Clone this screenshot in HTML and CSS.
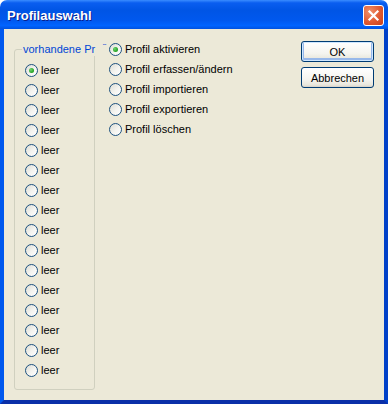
FILE: index.html
```html
<!DOCTYPE html>
<html lang="de">
<head>
    <meta charset="UTF-8">
    <title>Profilauswahl</title>
    <link rel="stylesheet" href="styles.css">
</head>
<body>
    <div class="window">
        <div class="titlebar">
            <span class="title">Profilauswahl</span>
            <button class="close-button" title="Schließen">
                <svg width="13" height="13" viewBox="0 0 13 13">
                    <path d="M2.5 2.5 L10.5 10.5 M10.5 2.5 L2.5 10.5" stroke="#fff" stroke-width="2.2" stroke-linecap="square"/>
                </svg>
            </button>
        </div>
        <div class="client">
            <div class="group">
                <span class="group-label">vorhandene Pr<span class="dots">...</span></span>
                <div id="profileList" class="radio-list"></div>
            </div>
            <div class="radio-list actions">
                <label class="radio-row"><span class="radio checked"></span>Profil aktivieren</label>
                <label class="radio-row"><span class="radio"></span>Profil erfassen/ändern</label>
                <label class="radio-row"><span class="radio"></span>Profil importieren</label>
                <label class="radio-row"><span class="radio"></span>Profil exportieren</label>
                <label class="radio-row"><span class="radio"></span>Profil löschen</label>
            </div>
            <div class="buttons">
                <button class="btn default">OK</button>
                <button class="btn">Abbrechen</button>
            </div>
        </div>
    </div>

    <script>
        // 16 empty profile slots, first one selected
        const list = document.getElementById('profileList');
        for (let i = 0; i < 16; i++) {
            const row = document.createElement('label');
            row.className = 'radio-row';
            row.innerHTML = '<span class="radio' + (i === 0 ? ' checked' : '') + '"></span>leer';
            list.appendChild(row);
        }
    </script>
</body>
</html>
```

FILE: styles.css
```css
body {
    margin: 0;
    background: #fff;
    font-family: "Liberation Sans", Arial, sans-serif;
    font-size: 11px;
}
.window {
    width: 388px;
    height: 404px;
    display: flex;
    flex-direction: column;
}
.titlebar {
    height: 29px;
    flex-shrink: 0;
    display: flex;
    align-items: center;
    justify-content: space-between;
    padding: 0 4px 0 7px;
    border-radius: 7px 7px 0 0;
    background: linear-gradient(#3a8cff 0%, #0a5ef0 10%, #0055e5 35%, #0058ee 70%, #0064ff 88%, #0052e0 100%);
}
.title {
    color: #fff;
    font-weight: bold;
    font-size: 13px;
    font-family: "Liberation Sans", Arial, sans-serif;
    text-shadow: 1px 1px 0 #0a1f8c;
    margin-top: 2px;
}
.close-button {
    width: 21px;
    height: 21px;
    padding: 0;
    margin-top: 2px;
    border: 1px solid #fff;
    border-radius: 3px;
    background: radial-gradient(circle at 30% 30%, #f0906a, #e05a32 55%, #c8401c);
    display: flex;
    align-items: center;
    justify-content: center;
}
.client {
    flex: 1;
    display: flex;
    align-items: flex-start;
    background: #ece9d8;
    border: 4px solid #0055e5;
    border-top: none;
    border-bottom-color: #0a2fa8;
    border-left-color: #0058ee;
    border-right-color: #0040c8;
    padding-left: 10px;
}
.group {
    position: relative;
    width: 81px;
    height: 341px;
    box-sizing: border-box;
    margin-top: 20px;
    padding: 10px 0 0 10px;
    border: 1px solid #d0d0bf;
    border-radius: 3px;
}
.group-label {
    position: absolute;
    top: -7px;
    left: 7px;
    padding: 0 1px;
    background: #ece9d8;
    color: #0046d5;
    line-height: 13px;
    white-space: nowrap;
    display: flex;
    align-items: flex-start;
}
.dots {
    margin-left: 7px;
    margin-top: -4px;
    font-size: 8px;
    line-height: 8px;
    letter-spacing: -1px;
}
.radio-list {
    display: flex;
    flex-direction: column;
}
.actions {
    margin-top: 10px;
    margin-left: 14px;
}
.radio-row {
    height: 20px;
    display: flex;
    align-items: center;
    gap: 3px;
    color: #000;
    white-space: nowrap;
}
.radio {
    width: 13px;
    height: 13px;
    box-sizing: border-box;
    border: 1px solid #1c5180;
    border-radius: 50%;
    background: linear-gradient(135deg, #dcdcd4 0%, #f4f4f0 55%, #ffffff 100%);
    display: flex;
    align-items: center;
    justify-content: center;
}
.radio.checked::after {
    content: "";
    width: 5px;
    height: 5px;
    border-radius: 50%;
    background: radial-gradient(circle at 35% 35%, #6fd36f, #21a121 70%);
}
.buttons {
    margin-left: auto;
    margin-right: 10px;
    margin-top: 12px;
    display: flex;
    flex-direction: column;
    gap: 5px;
}
.btn {
    width: 73px;
    height: 21px;
    padding: 0;
    font-family: inherit;
    font-size: 11px;
    color: #000;
    border: 1px solid #003c74;
    border-radius: 3px;
    background: linear-gradient(#ffffff 0%, #f5f4ef 60%, #e8e6dc 90%, #d6d0c5 100%);
}
.btn.default {
    box-shadow: inset 0 0 0 1px #cee7ff, inset 0 -1px 0 2px #98b8ea;
}
```
